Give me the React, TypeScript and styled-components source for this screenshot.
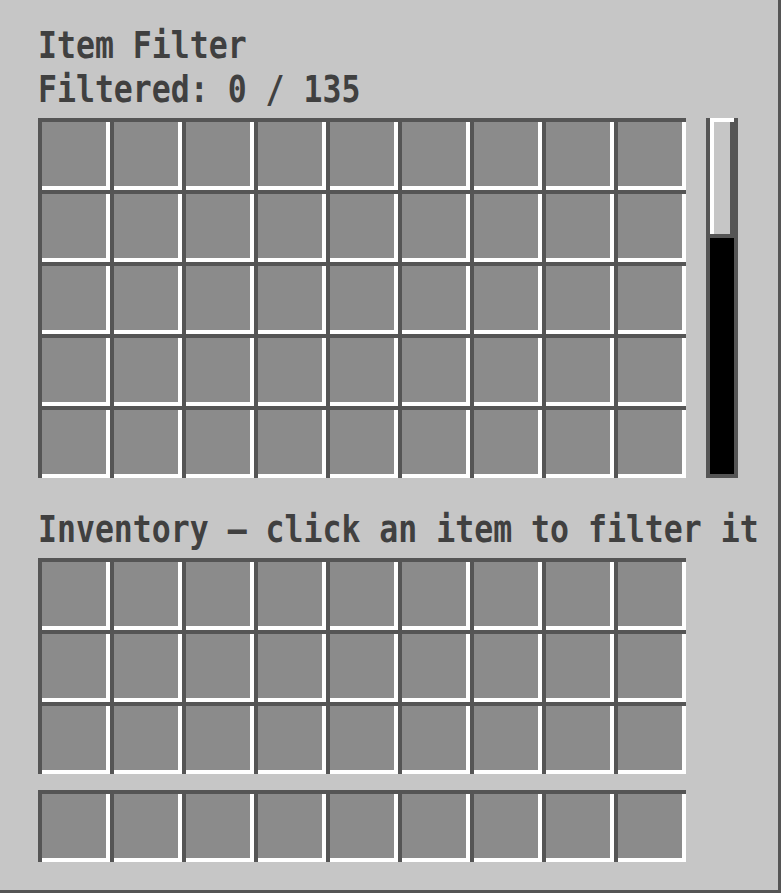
import React from "react";
import styled, { createGlobalStyle } from "styled-components";

const GlobalStyle = createGlobalStyle`
  html, body {
    margin: 0;
    padding: 0;
    background: #c6c6c6;
  }
  * { box-sizing: border-box; }
`;

const SLOT = 72;
const EDGE = 4;

const Window = styled.div`
  width: 781px;
  height: 893px;
  background: #c6c6c6;
  border-right: 3px solid #555555;
  border-bottom: 3px solid #555555;
  padding: 22px 0 0 38px;
  display: flex;
  flex-direction: column;
  font-family: "DejaVu Sans Mono", "Liberation Mono", monospace;
  color: #404040;
`;

const Line = styled.div<{ $gap?: number }>`
  height: 44px;
  line-height: 44px;
  margin-top: ${(p) => p.$gap ?? 0}px;
  white-space: nowrap;
`;

/* pixel-font style text: monospace advance, stretched a little taller */
const Text = styled.span`
  display: inline-block;
  font-size: 31.5px;
  font-weight: bold;
  transform: scaleY(1.2);
  transform-origin: 0 19.4px;
`;

const Row = styled.div<{ $gap?: number }>`
  display: flex;
  gap: 20px;
  margin-top: ${(p) => p.$gap ?? 0}px;
`;

const Grid = styled.div<{ $rows: number; $gap?: number }>`
  display: grid;
  grid-template-columns: repeat(9, ${SLOT}px);
  grid-template-rows: repeat(${(p) => p.$rows}, ${SLOT}px);
  margin-top: ${(p) => p.$gap ?? 0}px;
`;

const Slot = styled.div`
  width: ${SLOT}px;
  height: ${SLOT}px;
  background: #8b8b8b;
  box-shadow: inset ${EDGE}px ${EDGE}px 0 0 #555555,
    inset -${EDGE}px -${EDGE}px 0 0 #ffffff;
`;

const ScrollTrack = styled.div`
  width: 32px;
  height: 360px;
  background: #000000;
  border-left: 4px solid #555555;
  border-right: 4px solid #555555;
  border-bottom: 4px solid #555555;
  display: flex;
  flex-direction: column;
`;

const ScrollThumb = styled.div`
  height: 120px;
  background: #c6c6c6;
  box-shadow: inset 0 4px 0 0 #ffffff, inset 0 -4px 0 0 #555555,
    inset 4px 0 0 0 #ffffff, inset -4px 0 0 0 #555555;
`;

const SlotGrid = ({ rows, gap }: { rows: number; gap?: number }) => (
  <Grid $rows={rows} $gap={gap}>
    {Array.from({ length: rows * 9 }, (_, i) => (
      <Slot key={i} />
    ))}
  </Grid>
);

export default function App() {
  const filtered = 0;
  const total = 135;
  return (
    <>
      <GlobalStyle />
      <Window>
        <Line>
          <Text>Item Filter</Text>
        </Line>
        <Line>
          <Text>
            Filtered: {filtered} / {total}
          </Text>
        </Line>
        <Row $gap={8}>
          <SlotGrid rows={5} />
          <ScrollTrack>
            <ScrollThumb />
          </ScrollTrack>
        </Row>
        <Line $gap={28}>
          <Text>Inventory — click an item to filter it</Text>
        </Line>
        <SlotGrid rows={3} gap={8} />
        <SlotGrid rows={1} gap={16} />
      </Window>
    </>
  );
}
